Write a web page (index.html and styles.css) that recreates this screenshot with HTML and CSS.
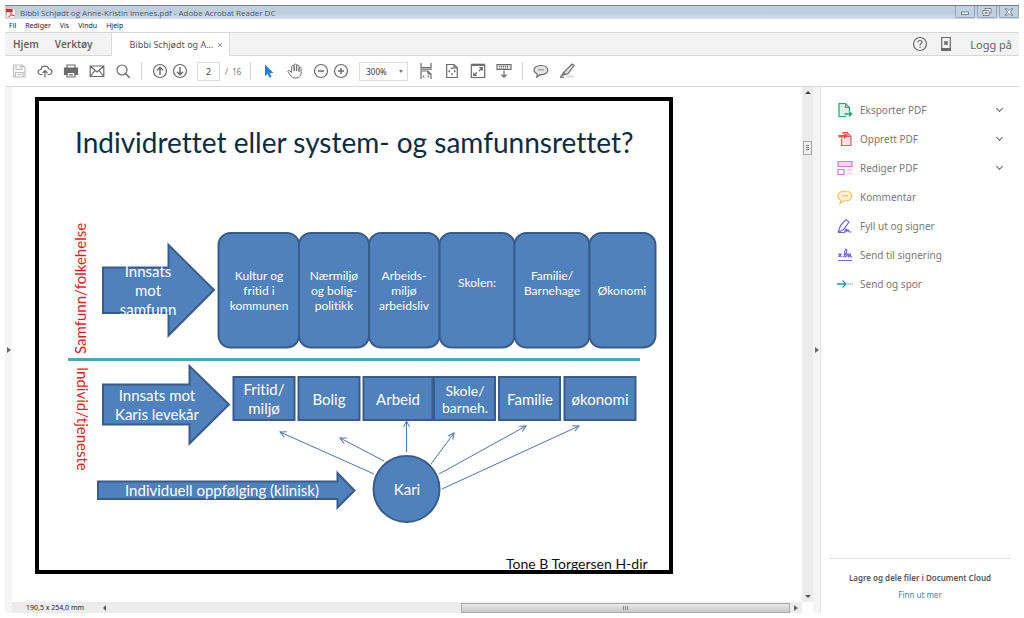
FILE: index.html
```html
<!DOCTYPE html>
<html lang="no">
<head>
<meta charset="utf-8">
<meta name="viewport" content="width=device-width, initial-scale=1">
<title>Bibbi Schjødt og Anne-Kristin Imenes.pdf - Adobe Acrobat Reader DC</title>
<link rel="stylesheet" href="styles.css">
</head>
<body>
<div class="app">
  <header class="titlebar">
    <svg class="app-icon" viewBox="0 0 12 12" aria-hidden="true"><path d="M1 0h7l3 3v9H1z" fill="#fff" stroke="#c9a5a5" stroke-width=".6"/><path d="M0 1h8v4H0z" fill="#d22c27"/><path d="M3 11c2-2 3-4 3-6 0 3 2 4 4 4-3-.4-5 0-7 2z" fill="none" stroke="#d22c27" stroke-width=".9"/></svg>
    <h1 class="title">Bibbi Schjødt og Anne-Kristin Imenes.pdf - Adobe Acrobat Reader DC</h1>
    <div class="window-buttons">
      <button class="win-btn" aria-label="Minimer"><svg viewBox="0 0 10 8"><rect x="1.500" y="4" width="7" height="2.500"/></svg></button>
      <button class="win-btn" aria-label="Gjenopprett"><svg viewBox="0 0 10 8"><path d="M3 2V.5h6V5H7.500M1 2.500h6v5H1zM3 4.200h2v1.500H3z"/></svg></button>
      <button class="win-btn" aria-label="Lukk"><svg viewBox="0 0 10 8"><path d="M1 .8h2.200L5 2.600 6.800.8H9L6.300 4 9 7.200H6.800L5 5.400 3.200 7.200H1L3.700 4z"/></svg></button>
    </div>
  </header>

  <nav class="menubar" aria-label="Meny">
    <button>Fil</button><button>Rediger</button><button>Vis</button><button>Vindu</button><button>Hjelp</button>
  </nav>

  <div class="tabs">
    <button class="tab home">Hjem</button>
    <button class="tab tools">Verktøy</button>
    <div class="tab-active">
      <span>Bibbi Schjødt og A...</span>
      <button class="tab-close" aria-label="Lukk fane"><svg viewBox="0 0 6 6"><path d="M1 1l4 4M5 1L1 5"/></svg></button>
    </div>
    <div class="account">
      <button class="icon" aria-label="Hjelp"><svg viewBox="0 0 16 16"><circle cx="8" cy="8" r="6.500"/><path d="M6 6.500c0-2.700 4-2.600 4-.2 0 1.600-2 1.500-2 3.100M8 10.700v1.300"/></svg></button>
      <button class="icon" aria-label="Mobil"><svg viewBox="0 0 16 16"><path d="M3.700 1.500h8.600v13H3.700z"/><path d="M3.700 12.500h8.600v2H3.700z" fill="#6b6b6b"/><path d="M6.300 5.300l3.400 3.400M9.700 5.300L6.300 8.700" stroke-width="1.700"/></svg></button>
      <button class="login">Logg på</button>
    </div>
  </div>

  <div class="toolbar" role="toolbar" aria-label="Verktøylinje">
    <button class="icon muted" aria-label="Lagre"><svg viewBox="0 0 16 16"><path d="M2.500 2h9L14 4.500V14H2.500zM5 2v4.500h6V2M9 3v2M4.500 14V9.500H12V14M6.500 11.700h3.500"/></svg></button>
    <button class="icon" aria-label="Last opp"><svg viewBox="0 0 16 16"><path d="M5.500 11.500H3.800C-.2 11.300.5 6.300 4 6.500c.3-4.500 7-4.500 7.700-.5 4.300-.2 4.300 5.400.5 5.500h-1.700M8 14.500V7.700M5.500 10L8 7.500l2.500 2.500"/></svg></button>
    <button class="icon" aria-label="Skriv ut"><svg viewBox="0 0 16 16"><path d="M4 5V2h8v3"/><path d="M1.500 5h13v6.500H12V9H4v2.500H1.500z" fill="#6b6b6b"/><path d="M4 9.500h8V14H4zM6 11.800h4"/></svg></button>
    <button class="icon" aria-label="E-post"><svg viewBox="0 0 16 16"><path d="M1.200 3h13.600v10.500H1.200zM1.200 3L8 9l6.800-6M1.200 13.500L6 7.300M14.800 13.500L10 7.300"/></svg></button>
    <button class="icon" aria-label="Søk"><svg viewBox="0 0 16 16"><circle cx="7" cy="7" r="5"/><path d="M10.700 10.700l4 4" stroke-width="1.600"/></svg></button>
    <span class="divider"></span>
    <div class="pair">
      <button class="icon" aria-label="Forrige side"><svg viewBox="0 0 16 16"><circle cx="8" cy="8" r="6.500"/><path d="M8 12V4.500M5 7.300l3-3 3 3" stroke-width="1.500"/></svg></button>
      <button class="icon" aria-label="Neste side"><svg viewBox="0 0 16 16"><circle cx="8" cy="8" r="6.500"/><path d="M8 4v7.500M5 8.700l3 3 3-3" stroke-width="1.500"/></svg></button>
    </div>
    <div class="page-field"><input id="page" type="text" value="2" aria-label="Sidetall"><label for="page">/&nbsp; 16</label></div>
    <span class="divider"></span>
    <button class="icon" aria-label="Markeringsverktøy"><svg viewBox="0 0 16 16"><path d="M4 1.500v11.700l2.700-2.400 1.700 3.900 2-.9-1.700-3.700 3.800-.2z" fill="#2680d0" stroke="none"/></svg></button>
    <button class="icon" aria-label="Hånd"><svg viewBox="0 0 16 16"><path d="M4.500 9.500L2.800 7.800C1.700 6.900.4 8 1.200 9.200l3.300 4.300c2.500 2.700 9 1.800 9.600-2.700V5.400c0-1.600-2.100-1.600-2.100 0V8.500M12 8.500V3.200c0-1.700-2.400-1.700-2.400 0V8M9.600 8V2.300c0-1.700-2.400-1.700-2.400 0V8M7.200 8V3.400c0-1.600-2.400-1.600-2.400 0l-.3 6.100" stroke-width="1"/></svg></button>
    <div class="pair">
      <button class="icon" aria-label="Zoom ut"><svg viewBox="0 0 16 16"><circle cx="8" cy="8" r="6.500"/><path d="M5 8h6" stroke-width="1.500"/></svg></button>
      <button class="icon" aria-label="Zoom inn"><svg viewBox="0 0 16 16"><circle cx="8" cy="8" r="6.500"/><path d="M5 8h6M8 5v6" stroke-width="1.500"/></svg></button>
    </div>
    <div class="zoom"><select aria-label="Zoom"><option>300%</option></select></div>
    <button class="icon" aria-label="Tilpass bredde"><svg viewBox="0 0 16 16"><path d="M3 0v4.500h10V0M3 16V8h7l3 3v5M10 8v3h3M2 6.200h12"/><path d="M4.500 13.500l1.700-1.500v3zM11.500 13.500L9.800 12v3z" fill="#6b6b6b" stroke="none"/></svg></button>
    <button class="icon" aria-label="Tilpass side"><svg viewBox="0 0 16 16"><path d="M2.700 1.500H10l3.300 3.300v9.700H2.700zM10 1.500v3.300h3.300"/><path d="M8 4l1.500 2h-3zM8 12.500l1.500-2h-3zM4 8.300l2-1.500v3zM12 8.300l-2-1.500v3z" fill="#6b6b6b" stroke="none"/></svg></button>
    <button class="icon" aria-label="Fullskjerm"><svg viewBox="0 0 16 16"><path d="M1.300 2h13.400v12.500H1.300z"/><path d="M1.300 1.800h13.400" stroke-width="2.200"/><path d="M9 8l3-3M9.300 4.700h3v3M7 9.500l-3 3M3.800 9.500v3h3"/></svg></button>
    <button class="icon" aria-label="Lesemodus"><svg viewBox="0 0 16 16"><path d="M1 1.700h14v4.600H1z"/><path d="M3 3.400h10M3 5h10" stroke-dasharray="1.300 .7"/><path d="M8 7.500V14M5.300 11.500L8 14.200l2.700-2.700"/></svg></button>
    <span class="divider"></span>
    <button class="icon" aria-label="Kommentar"><svg viewBox="0 0 16 16"><path d="M8 2.500c9 0 9 9.300 0 9.300l-1-.1-3.200 2.500.4-3.200C-1.200 8.500.7 2.500 8 2.500z" fill="#e4e4e4"/><path d="M5 6.700h6" stroke="#999"/></svg></button>
    <button class="icon" aria-label="Merk tekst"><svg viewBox="0 0 16 16"><path d="M7 13.500h8" stroke="#ddd" stroke-width="2"/><path d="M13 1l2 1.500-6 8.300-3.600.7-.5-2.300zM4.900 9.200L2.300 13l3.100-1.500" fill="#ddd"/><path d="M1 14.300h4"/></svg></button>
  </div>

  <div class="workspace">
    <button class="gutter" aria-label="Vis navigasjonsrute"><span class="tri right"></span></button>
    <main class="document">
      <div class="viewport">
        <svg class="slide" viewBox="35 97 638 477" role="img" aria-label="Individrettet eller system- og samfunnsrettet?">
          <defs>
            <marker id="tip" viewBox="0 0 8 8" refX="7" refY="4" markerWidth="8" markerHeight="8" markerUnits="userSpaceOnUse" orient="auto"><path d="M1 1l6 3-6 3" class="link"/></marker>
          </defs>
          <rect x="37" y="99" width="634" height="473" class="frame"/>
          <text x="75" y="153" class="heading">Individrettet eller system- og samfunnsrettet?</text>

          <text transform="translate(86 354) rotate(-90)" class="side">Samfunn/folkehelse</text>
          <text transform="translate(77 367) rotate(90)" class="side">Individ/tjeneste</text>
          <path d="M68 359.500h572" class="rule"/>

          <g class="shape">
            <path d="M103 267.500h65.500V245l45.500 45-45.500 45.500v-22.500H103z"/>
            <path d="M103 384.500h86.500V366l39.500 38.500-39.500 39v-19H103z"/>
            <path d="M98 481.500h239.500V473l17 17.500-17 17v-8.500H98z"/>
            <rect x="218.500" y="233" width="80.500" height="114.500" rx="12"/>
            <rect x="299" y="233" width="70" height="114.500" rx="12"/>
            <rect x="369" y="233" width="70.500" height="114.500" rx="12"/>
            <rect x="439.500" y="233" width="75" height="114.500" rx="12"/>
            <rect x="514.500" y="233" width="75" height="114.500" rx="12"/>
            <rect x="589.500" y="233" width="66" height="114.500" rx="12"/>
            <rect x="233.500" y="377" width="61" height="43"/>
            <rect x="298.500" y="377" width="61" height="43"/>
            <rect x="363.500" y="377" width="69" height="43"/>
            <rect x="434" y="377" width="61" height="43"/>
            <rect x="499" y="377" width="61" height="43"/>
            <rect x="564.500" y="377" width="71" height="43"/>
            <circle cx="406.500" cy="489" r="33"/>
          </g>

          <g class="link">
            <path d="M374 474L280 432" marker-end="url(#tip)"/>
            <path d="M384 461L340 438" marker-end="url(#tip)"/>
            <path d="M406.500 452V421" marker-end="url(#tip)"/>
            <path d="M431 464L454 433" marker-end="url(#tip)"/>
            <path d="M439 474L526 426" marker-end="url(#tip)"/>
            <path d="M442 489L579 426" marker-end="url(#tip)"/>
          </g>

          <g class="large">
            <text x="148" y="277">Innsats</text><text x="148" y="296">mot</text><text x="148" y="315">samfunn</text>
            <text x="157" y="401">Innsats mot</text><text x="157" y="420">Karis levekår</text>
            <text x="222" y="496">Individuell oppfølging (klinisk)</text>
            <text x="264" y="395">Fritid/</text><text x="264" y="414">miljø</text>
            <text x="329" y="405">Bolig</text><text x="398" y="405">Arbeid</text>
            <text x="530" y="405">Familie</text><text x="600" y="405">økonomi</text>
            <text x="407" y="495">Kari</text>
          </g>
          <g class="medium"><text x="465" y="396">Skole/</text><text x="465" y="413">barneh.</text></g>
          <g class="small">
            <text x="259" y="280">Kultur og</text><text x="259" y="295">fritid i</text><text x="259" y="310">kommunen</text>
            <text x="334" y="280">Nærmiljø</text><text x="334" y="295">og bolig-</text><text x="334" y="310">politikk</text>
            <text x="404" y="280">Arbeids-</text><text x="404" y="295">miljø</text><text x="404" y="310">arbeidsliv</text>
            <text x="477" y="287">Skolen:</text>
            <text x="552" y="280">Familie/</text><text x="552" y="295">Barnehage</text>
            <text x="622" y="295">Økonomi</text>
          </g>
          <text x="506" y="569" class="credit">Tone B Torgersen H-dir</text>
        </svg>
      </div>
      <div class="vscroll"><span class="tri up"></span><span class="vthumb"></span><span class="tri down"></span></div>
      <div class="hscroll"><span class="size">190,5 x 254,0 mm</span><span class="tri left"></span><span class="hthumb"></span><span class="tri right"></span></div>
    </main>
    <button class="gutter" aria-label="Skjul verktøyrute"><span class="tri right"></span></button>
    <aside class="panel">
      <ul class="tool-list">
        <li><button class="tool"><svg viewBox="0 0 16 16"><path d="M9 14.500H2V1.500h6.500l4 4V9" fill="#dcf3ea" stroke="#20a67a"/><path d="M8.500 1.500v4h4" stroke="#20a67a"/><path d="M7.500 12h7M12 9.500l2.500 2.500-2.500 2.500" stroke="#20a67a" stroke-width="1.500"/></svg><span>Eksporter PDF</span><i class="chevron"></i></button></li>
        <li><button class="tool"><svg viewBox="0 0 16 16"><path d="M4.500 7.500v7h9.500v-9l-4-4H6V3" fill="#fde3e1" stroke="#e2574f"/><path d="M10 1.500v4h4" stroke="#e2574f"/><path d="M1.500 6.500V4H7V2l3.500 3L7 8V6.500z" fill="#e2574f" stroke="none"/></svg><span>Opprett PDF</span><i class="chevron"></i></button></li>
        <li><button class="tool"><svg viewBox="0 0 16 16"><path d="M1 1.500h14v5H1z" fill="#f6d5f3" stroke="#d67ad0"/><path d="M1 9.500h6v5H1z" stroke="#d67ad0"/><path d="M9.500 9h6v2h-6zM9.500 12.500h6v2h-6z" fill="#f3d3f0" stroke="none"/></svg><span>Rediger PDF</span><i class="chevron"></i></button></li>
        <li><button class="tool"><svg viewBox="0 0 16 16"><path d="M8 2c9 0 9 10 0 10l-1-.1L3 14.500l.7-3.200C-1.500 8.500.5 2 8 2z" fill="#fdf0cb" stroke="#efc45e"/><path d="M5 6.700h6" stroke="#efc45e"/></svg><span>Kommentar</span></button></li>
        <li><button class="tool"><svg viewBox="0 0 16 16"><path d="M1 14.500L3.500 7.500 9 1.500l3 2.500-5.500 7.500-5.500 3h6.500c1-4 2.500-4.500 2-1.500-.3 2.500 1.500-2.500 2-.8 0 2.200 1.200 1.800 3 1.800" stroke="#7067dd"/></svg><span>Fyll ut og signer</span></button></li>
        <li><button class="tool"><svg viewBox="0 0 16 16"><path d="M1 13.500h14M1.500 6.500l3 3.500M4.500 6.500l-3 3.500M6 10c3-1.500 5-8 3-8-1.500 0-2 8-.5 8 1.200 0 1.500-3.500 2.500-3.500s-.6 3.500.6 3.500 1-3.200 1.600-3.200c.7 0-.7 3.200 1.800 3.200" stroke="#7067dd"/></svg><span>Send til signering</span></button></li>
        <li><button class="tool"><svg viewBox="0 0 16 16"><path d="M0 8h8.500M5.500 4.500L9 8l-3.500 3.500" stroke="#2b9bb8" stroke-width="1.300"/><path d="M10.500 8H16" stroke="#2b9bb8" stroke-dasharray="1.200 1"/></svg><span>Send og spor</span></button></li>
      </ul>
      <footer class="cloud"><p>Lagre og dele filer i Document Cloud</p><a href="#cloud">Finn ut mer</a></footer>
    </aside>
  </div>
</div>
</body>
</html>
```
FILE: styles.css
```css
* { box-sizing: border-box; }
html, body { height: 100%; }
body { margin: 0; padding: 5px; background: #fff; font-family: "Noto Sans", "Open Sans", sans-serif; color: #333; }
button { margin: 0; padding: 0; border: 0; background: none; font: inherit; color: inherit; white-space: nowrap; }
svg { display: block; fill: none; }
.app { display: flex; flex-direction: column; height: 100%; }

.titlebar { display: flex; align-items: center; height: 14px; flex: none; padding-left: 1px; border-top: 1px solid #73818f; background: linear-gradient(#c2d0de, #bccfe0 50%, #cfdfec); }
.app-icon { width: 10px; height: 12px; }
.title { flex: 1; margin: 0 0 0 4px; font-family: "Open Sans", "Noto Sans", sans-serif; font-size: 8px; line-height: 12px; font-weight: 400; color: #4c5a68; white-space: nowrap; }
.window-buttons { display: flex; gap: 2px; align-self: flex-start; }
.win-btn { display: grid; place-items: center; width: 20px; height: 12px; border: 1px solid #94a5b8; border-top: 0; border-radius: 0 0 2px 2px; background: #c3d2e2; }
.win-btn svg { width: 10px; height: 8px; fill: #fff; stroke: #5a6878; stroke-width: .8; }

.menubar { display: flex; gap: 9px; flex: none; height: 13px; padding-left: 4px; font-size: 7px; line-height: 13px; color: #222; }

.tabs { display: flex; flex: none; height: 24px; background: #f3f3f3; border-top: 1px solid #d8d8d8; border-bottom: 1px solid #d8d8d8; color: #666; }
.tab { font-size: 10px; font-weight: 600; }
.home { margin-left: 8px; }
.tools { margin: 0 18px 0 16px; }
.tab-active { display: flex; align-items: center; justify-content: space-between; width: 119px; height: 23px; padding: 0 6px 0 18px; background: #fff; border: solid #dcdcdc; border-width: 0 1px; font-size: 9px; color: #555; white-space: nowrap; }
.tab-close svg { width: 6px; height: 6px; stroke: #777; stroke-width: .8; }
.account { display: flex; align-items: center; gap: 10px; margin-left: auto; padding-right: 7px; }
.login { margin-left: 6px; font-size: 11px; }

.icon svg { width: 16px; height: 16px; stroke: #6b6b6b; stroke-width: 1.2; }
.icon.muted svg { stroke: #bdbdbd; }
.toolbar { display: flex; align-items: center; gap: 10px; flex: none; height: 31px; padding-left: 6px; border-bottom: 1px solid #d8d8d8; }
.divider { width: 1px; height: 18px; background: #d4d4d4; }
.pair { display: flex; gap: 4px; }
.page-field { display: flex; align-items: center; gap: 5px; margin: 0 -1px; font-size: 8px; color: #777; white-space: nowrap; }
.page-field input { width: 23px; height: 19px; padding: 0; border: 1px solid #dcdcdc; text-align: center; font: inherit; font-size: 9px; color: #444; }
.zoom { display: grid; align-items: center; }
.zoom select { width: 49px; height: 19px; padding: 0 0 0 6px; border: 1px solid #dcdcdc; border-radius: 0; appearance: none; background: #fff; font: inherit; font-size: 8px; color: #333; }
.zoom select, .zoom::after { grid-area: 1 / 1; }
.zoom::after { content: ""; justify-self: end; margin-right: 5px; border: 2px solid transparent; border-top: 3px solid #777; border-bottom: 0; pointer-events: none; }

.workspace { display: flex; flex: 1; min-height: 0; }
.gutter { display: grid; place-items: center; flex: none; width: 7px; background: #f5f5f5; }
.tri { width: 0; height: 0; border: 3px solid transparent; }
.tri.right { border-left: 4px solid #666; border-right: 0; }
.tri.left { border-right: 3px solid #555; border-left: 0; }
.tri.up { border-bottom: 3px solid #444; border-top: 0; }
.tri.down { border-top: 3px solid #555; border-bottom: 0; }

.document { display: grid; grid-template: 1fr 11px / 1fr 11px; flex: 1; min-width: 0; }
.viewport { min-width: 0; min-height: 0; overflow: hidden; padding: 10px 0 0 23px; }
.slide { width: 638px; font-family: Lato, "Noto Sans", sans-serif; font-variant-ligatures: none; }
.vscroll { display: flex; flex-direction: column; align-items: center; padding: 4px 0; background: #ececec; }
.vthumb { width: 9px; height: 14px; margin: 47px 0 auto; padding: 3px 2px; border: 1px solid #aaa; background: repeating-linear-gradient(#888 0 1px, #ddd 1px 2px) content-box #ddd; }
.hscroll { display: flex; align-items: center; padding: 0 4px 0 14px; background: #ececec; }
.size { width: 77px; font-size: 7px; line-height: 11px; color: #222; white-space: nowrap; }
.hthumb { display: grid; place-items: center; width: 329px; height: 10px; margin: 0 4px 0 auto; border: 1px solid #aaa; background: linear-gradient(#e8e8e8, #c9c9c9); }
.hthumb::after { content: ""; width: 5px; height: 4px; background: repeating-linear-gradient(90deg, #888 0 1px, transparent 1px 2px); }

.panel { display: flex; flex-direction: column; flex: none; width: 199px; border-left: 1px solid #e3e3e3; }
.tool-list { margin: 0; padding: 8px 16px 0 16px; list-style: none; }
.tool { display: flex; align-items: center; gap: 7px; width: 100%; height: 29px; font-size: 10px; color: #777; }
.tool svg { width: 16px; height: 16px; stroke-width: 1.2; }
.chevron { width: 5px; height: 5px; margin: 0 1px 3px auto; border: solid #666; border-width: 0 1px 1px 0; transform: rotate(45deg); }
.cloud { display: flex; flex-direction: column; align-items: center; gap: 3px; height: 55px; margin: auto 8px 0; padding-top: 12px; border-top: 1px solid #e0e0e0; font-size: 8px; line-height: 14px; color: #555; }
.cloud p { margin: 0; font-weight: 600; white-space: nowrap; }
.cloud a { color: #3b7fc4; text-decoration: none; }

.frame { fill: #fff; stroke: #000; stroke-width: 4; }
.heading { font-size: 28px; fill: #0c2c44; }
.side { font-size: 15px; fill: #f01820; }
.rule { stroke: #4aa5bf; stroke-width: 3; }
.shape { fill: #4f81bd; stroke: #385d8a; stroke-width: 2; }
.link { fill: none; stroke: #4a75b0; stroke-width: 1; }
.large, .medium, .small { fill: #fff; text-anchor: middle; }
.large { font-size: 15px; }
.medium { font-size: 14px; }
.small { font-size: 12px; }
.credit { font-size: 14px; fill: #111; }
```
